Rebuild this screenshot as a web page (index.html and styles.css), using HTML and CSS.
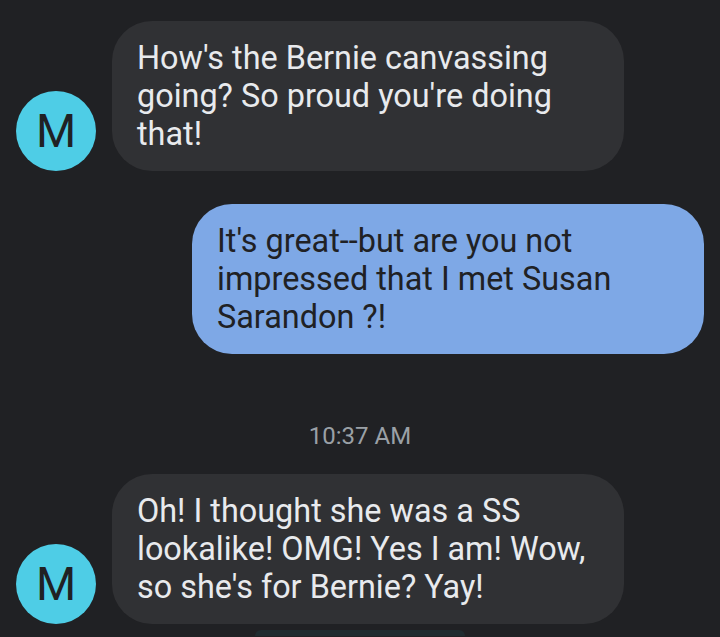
FILE: index.html
```html
<!DOCTYPE html>
<html>
<head>
<meta charset="utf-8">
<link rel="stylesheet" href="styles.css">
</head>
<body>
<div class="thread">
  <div class="row incoming">
    <div class="avatar">M</div>
    <div class="bubble gray">How's the Bernie canvassing going? So proud you're doing that!</div>
  </div>
  <div class="row outgoing">
    <div class="bubble blue">It's great--but are you not impressed that I met Susan Sarandon ?!</div>
  </div>
  <div class="timestamp">10:37 AM</div>
  <div class="row incoming">
    <div class="avatar">M</div>
    <div class="bubble gray">Oh! I thought she was a SS lookalike! OMG! Yes I am! Wow, so she's for Bernie? Yay!</div>
  </div>
  <div class="chip"></div>
</div>
</body>
</html>
```
FILE: styles.css
```css
html, body {
  margin: 0;
  padding: 0;
  background: #202124;
  height: 100%;
  overflow: hidden;
}
.thread {
  display: flex;
  flex-direction: column;
  padding: 21px 16px 0 16px;
  font-family: Roboto, "Noto Sans", sans-serif;
}
.row {
  display: flex;
  align-items: flex-end;
  gap: 16px;
}
.outgoing {
  justify-content: flex-end;
  margin-top: 33px;
}
.avatar {
  width: 80px;
  height: 80px;
  border-radius: 50%;
  background: #4ecde6;
  color: #202124;
  font-size: 46px;
  display: flex;
  align-items: center;
  justify-content: center;
  flex-shrink: 0;
}
.bubble {
  box-sizing: border-box;
  width: 512px;
  padding: 18px 20px 18px 25px;
  border-radius: 40px;
  font-size: 32.4px;
  line-height: 38px;
}
.gray {
  background: #303134;
  color: #e8eaed;
}
.blue {
  background: #7ea8e6;
  color: #202124;
}
.timestamp {
  margin: 67px 0 23px;
  text-align: center;
  font-size: 24px;
  line-height: 30px;
  color: #9aa0a6;
}
.chip {
  align-self: center;
  margin-top: 6px;
  width: 210px;
  height: 6px;
  border-radius: 20px 20px 0 0;
  background: #1f2c30;
}
```
